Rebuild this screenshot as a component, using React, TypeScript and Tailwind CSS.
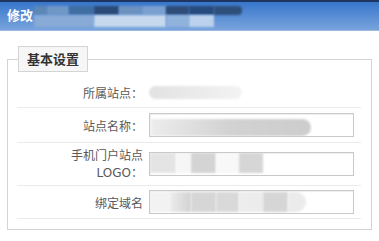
import React from 'react';

// blurred patches that cover private values in the screenshot
function Smudge({ className }: { className: string }) {
  return <div className={`blur-[1px] ${className}`} />;
}

function Row({
  label,
  height,
  children,
}: {
  label: React.ReactNode;
  height: string;
  children?: React.ReactNode;
}) {
  return (
    <div className={`flex items-center gap-[6px] border-b border-[#ebebeb] ${height}`}>
      <div className="flex w-[126px] shrink-0 flex-col items-end text-[12px] leading-[17px] text-[#595959]">{label}</div>
      <div className="flex-1">{children}</div>
    </div>
  );
}

function Input({ children }: { children?: React.ReactNode }) {
  return (
    <div className="relative h-[24px] w-[205px] overflow-hidden border border-[#c9c9c9] bg-white shadow-[inset_1px_1px_1px_#eee]">
      {children}
    </div>
  );
}

export default function App() {
  return (
    <div
      className="h-[241px] w-[379px] overflow-hidden bg-white"
      style={{ fontFamily: '"Noto Sans CJK SC", "Noto Sans", sans-serif' }}
    >
      {/* title bar */}
      <div className="flex h-[31px] items-start border-t-2 border-b border-t-[#1d3560] border-b-[#9bb8e0] bg-gradient-to-b from-[#3676cb] to-[#79a4dc] pl-[7px]">
        <span className="mt-[5px] text-[13px] font-bold leading-[16px] text-white">修改</span>
        <div className="ml-[1px] flex flex-col pt-[4px]">
          <div className="flex h-[9px]">
            <Smudge className="w-[13px] bg-[#5d87b5]" />
            <Smudge className="w-[22px] bg-[#7098c6]" />
            <Smudge className="w-[25px] bg-[#3f6ea3]" />
            <Smudge className="w-[25px] bg-[#2b4a78]" />
            <Smudge className="w-[23px] bg-[#6e92c0]" />
            <Smudge className="w-[24px] bg-[#7aa0cf]" />
            <Smudge className="w-[23px] bg-[#2e4c77]" />
            <Smudge className="w-[25px] bg-[#264b7c]" />
            <Smudge className="w-[28px] rounded-r-[4px] bg-[#2e4f7a]" />
          </div>
          <div className="flex h-[12px]">
            <Smudge className="w-[60px] bg-[#88aad6]" />
            <Smudge className="w-[72px] bg-[#c5d8ee]" />
            <Smudge className="w-[23px] bg-[#90b3dc]" />
            <Smudge className="w-[25px] bg-[#bcd2ec]" />
          </div>
        </div>
      </div>

      {/* form */}
      <div className="px-[7px] pt-[15px]">
        <fieldset className="border border-[#d4d4d4] px-[9px] pb-[10px]">
          <legend className="ml-[1px] border border-[#d4d4d4] bg-[#f6f6f6] px-[8px] text-[13px] font-bold leading-[24px] text-[#333]">
            基本设置
          </legend>
          <div className="mr-[1px]">
            <Row label="所属站点：" height="h-[36px] pt-[6px]">
              <Smudge className="h-[13px] w-[93px] rounded-full bg-gradient-to-r from-[#e2e2e2] to-[#f3f3f3]" />
            </Row>
            <Row label="站点名称：" height="h-[35px]">
              <Input>
                <Smudge className="absolute left-[1px] top-[5px] h-[17px] w-[160px] rounded-r-full bg-gradient-to-r from-[#ececec] via-[#d2d2d2] to-[#cdcdcd]" />
              </Input>
            </Row>
            <Row
              label={
                <>
                  <span>手机门户站点</span>
                  <span>
                    <span style={{ fontFamily: '"DejaVu Sans", sans-serif' }}>LOGO</span>：
                  </span>
                </>
              }
              height="h-[43px]"
            >
              <Input>
                <div className="absolute left-0 top-0 flex h-[20px]">
                  <Smudge className="w-[26px] bg-[#e4e4e4]" />
                  <Smudge className="w-[15px] bg-[#f6f6f6]" />
                  <Smudge className="w-[25px] bg-[#d4d4d4]" />
                  <Smudge className="w-[23px] bg-[#f8f8f8]" />
                  <Smudge className="w-[24px] bg-[#d6d6d6]" />
                </div>
              </Input>
            </Row>
            <Row label="绑定域名" height="h-[33px]">
              <Input>
                <div className="absolute left-0 top-[1px] flex h-[20px]">
                  <Smudge className="w-[20px] bg-[#f2f2f2]" />
                  <Smudge className="w-[21px] bg-gradient-to-r from-[#ececec] to-[#d2d2d2]" />
                  <Smudge className="w-[25px] bg-[#d6d6d6]" />
                  <Smudge className="w-[23px] bg-[#d9d9d9]" />
                  <Smudge className="w-[24px] bg-[#ececec]" />
                  <Smudge className="w-[25px] bg-[#d6d6d6]" />
                  <Smudge className="w-[18px] rounded-r-full bg-[#ebebeb]" />
                </div>
              </Input>
            </Row>
          </div>
        </fieldset>
      </div>
    </div>
  );
}
